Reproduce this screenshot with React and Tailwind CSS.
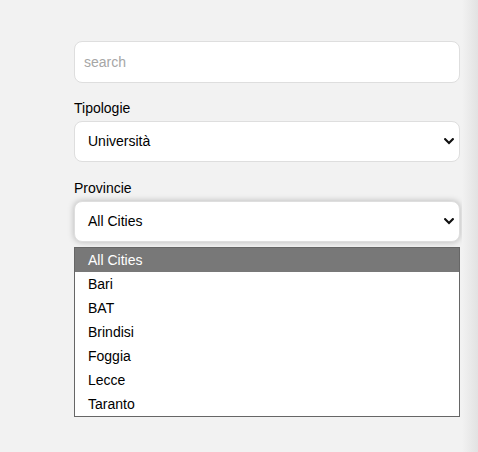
import React from "react";

function Chevron() {
  return (
    <svg width="10" height="7" viewBox="0 0 10 7" className="shrink-0">
      <polyline points="1.2,1.2 5,5 8.8,1.2" fill="none" stroke="#111" strokeWidth="2.2" strokeLinecap="square" />
    </svg>
  );
}

function SelectBox({ value, focused }) {
  return (
    <div
      className={
        "h-[41px] w-full flex items-center justify-between pl-[13px] pr-[5px] bg-white rounded-[8px] border border-[#dedede] text-[14px] text-black " +
        (focused ? "shadow-[0_0_6px_rgba(0,0,0,0.25)]" : "")
      }
    >
      <span>{value}</span>
      <Chevron />
    </div>
  );
}

export default function App() {
  const cities = ["All Cities", "Bari", "BAT", "Brindisi", "Foggia", "Lecce", "Taranto"];
  return (
    <div className="min-h-[452px] bg-[#f2f2f2] flex" style={{ fontFamily: '"Liberation Sans", Arial, sans-serif' }}>
      <div className="w-[462px] pl-[74px] pr-[2px] pt-[41px]">
        <div className="w-[386px]">
          <div className="h-[42px] flex items-center pl-[9px] bg-white rounded-[8px] border border-[#dedede] text-[14px] text-[#a6a6a6]">
            search
          </div>
          <div className="mt-[15px] h-[20px] leading-[20px] text-[14px] text-black">Tipologie</div>
          <div className="mt-[3px]">
            <SelectBox value="Università" />
          </div>
          <div className="mt-[16px] h-[20px] leading-[20px] text-[14px] text-black">Provincie</div>
          <div className="mt-[3px]">
            <SelectBox value="All Cities" focused />
          </div>
          <div className="mt-[5px] border border-[#666] bg-white">
            {cities.map((c, i) => (
              <div
                key={c}
                className={
                  "h-[24px] leading-[24px] pl-[13px] text-[14px] " +
                  (i === 0 ? "bg-[#787878] text-white" : "text-black")
                }
              >
                {c}
              </div>
            ))}
          </div>
        </div>
      </div>
      <div className="w-[16px] bg-linear-to-r from-[#f2f2f2] to-[#e2e2e2]" />
    </div>
  );
}
